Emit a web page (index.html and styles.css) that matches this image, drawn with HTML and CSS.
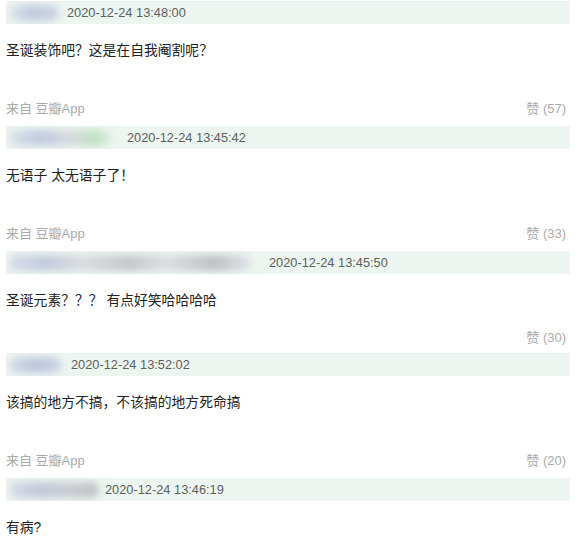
FILE: index.html
```html
<!DOCTYPE html>
<html lang="zh-CN">
<head>
  <meta charset="UTF-8">
  <meta name="viewport" content="width=device-width, initial-scale=1.0">
  <title>评论</title>
  <link rel="stylesheet" href="styles.css">
</head>
<body>
  <div class="comments">

    <div class="comment">
      <div class="bar">
        <span class="name name-1"></span>
        <span class="date">2020-12-24 13:48:00</span>
      </div>
      <p class="text">圣诞装饰吧？这是在自我阉割呢？</p>
      <div class="meta">
        <span class="from">来自 豆瓣App</span>
        <span class="likes">赞 (57)</span>
      </div>
    </div>

    <div class="comment">
      <div class="bar">
        <span class="name name-2"></span>
        <span class="date">2020-12-24 13:45:42</span>
      </div>
      <p class="text">无语子 太无语子了！</p>
      <div class="meta">
        <span class="from">来自 豆瓣App</span>
        <span class="likes">赞 (33)</span>
      </div>
    </div>

    <div class="comment">
      <div class="bar">
        <span class="name name-3"></span>
        <span class="date">2020-12-24 13:45:50</span>
      </div>
      <p class="text">圣诞元素？？？ 有点好笑哈哈哈哈</p>
      <div class="meta meta-short">
        <span class="from"></span>
        <span class="likes">赞 (30)</span>
      </div>
    </div>

    <div class="comment">
      <div class="bar">
        <span class="name name-4"></span>
        <span class="date">2020-12-24 13:52:02</span>
      </div>
      <p class="text">该搞的地方不搞，不该搞的地方死命搞</p>
      <div class="meta">
        <span class="from">来自 豆瓣App</span>
        <span class="likes">赞 (20)</span>
      </div>
    </div>

    <div class="comment">
      <div class="bar">
        <span class="name name-5"></span>
        <span class="date">2020-12-24 13:46:19</span>
      </div>
      <p class="text">有病?</p>
    </div>

  </div>
</body>
</html>
```

FILE: styles.css
```css
/* Comment list */
* {
  margin: 0;
  padding: 0;
  box-sizing: border-box;
}

body {
  font-family: 'Liberation Sans', 'Noto Sans CJK SC', sans-serif;
  background: #fff;
  color: #2a2a2a;
}

.comments {
  padding: 1px 6px 0 6px;
}

.bar {
  display: flex;
  align-items: center;
  height: 23px;
  background-color: #ecf5f0;
  overflow: hidden;
}

.name {
  display: block;
  height: 16px;
  margin-left: 3px;
  border-radius: 8px;
  filter: blur(3.5px);
  flex-shrink: 0;
}

.name-1 {
  width: 50px;
  margin-right: 8px;
  background: linear-gradient(90deg, #dfe4ec, #bfcade 45%, #cdd5e2);
}

.name-2 {
  width: 102px;
  margin-right: 16px;
  background: linear-gradient(90deg, #dde2ea, #bfcbdf 30%, #d6dade 60%, #bfe2bf 85%, #e1eee5);
}

.name-3 {
  width: 242px;
  margin-right: 18px;
  background: linear-gradient(90deg, #d6dce7, #c2cbdc 15%, #dadde2 30%, #c4c7cc 50%, #dcdfe2 65%, #bdc0c5 85%, #e2e5e8);
}

.name-4 {
  width: 52px;
  margin-right: 10px;
  background: linear-gradient(90deg, #d6dcea, #bcc7dc 50%, #cbd3e2);
}

.name-5 {
  width: 90px;
  margin-right: 6px;
  background: linear-gradient(90deg, #d8dee8, #c3cbd9 30%, #c9ccd0 70%, #bfc2c6);
}

.date {
  font-size: 12.8px;
  color: #5f5f5f;
  white-space: nowrap;
}

.text {
  font-size: 13.8px;
  line-height: 20px;
  margin-top: 17px;
  color: #222;
}

.meta {
  display: flex;
  justify-content: space-between;
  align-items: center;
  height: 20px;
  margin-top: 36px;
  margin-bottom: 9px;
  padding-right: 4px;
  font-size: 13px;
  color: #aaa;
}

.meta-short {
  margin-top: 15px;
  margin-bottom: 7px;
}
```
